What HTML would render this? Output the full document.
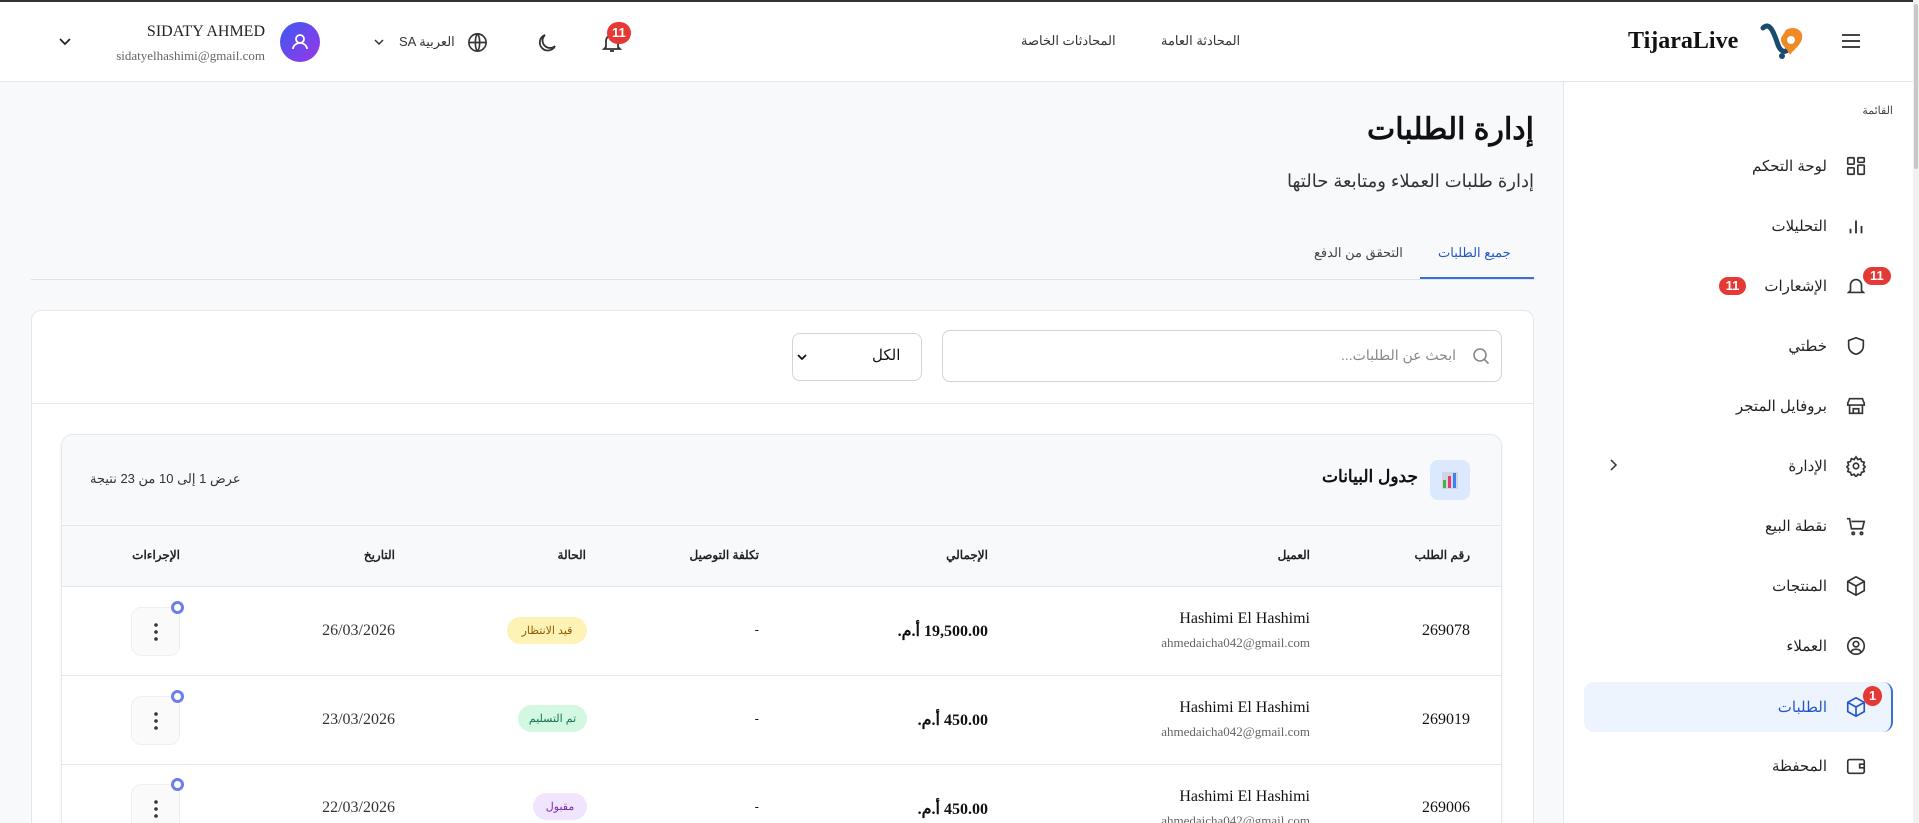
<!DOCTYPE html>
<html style="overflow:hidden;height:823px"><head><meta charset="utf-8"><style>
*{box-sizing:border-box;margin:0;padding:0}
html,body{width:1919px;height:823px;overflow:hidden}
body{background:#f8f9fb;font-family:"Liberation Sans","Noto Sans CJK SC",sans-serif;color:#111}
#wrap{position:relative;width:1919px;height:823px;overflow:hidden}
.abs{position:absolute}
.serif{font-family:"Liberation Serif","Noto Serif CJK SC",serif}
.header{left:0;top:0;width:1919px;height:82px;background:#fff;border-top:2px solid #333;border-bottom:1px solid #e5e7eb}
.side{left:1563px;top:82px;width:350px;height:741px;background:#fff;border-left:1px solid #e5e7eb;overflow:hidden}
.scroll{left:1913px;top:0;width:6px;height:823px;background:#f1f1f1}
.scroll div{position:absolute;left:1px;top:4px;width:4px;height:165px;background:#c8c8c8;border-radius:2px}
.item{position:absolute;right:28px;width:308px;height:50px;direction:rtl;display:flex;align-items:center;font-size:15px;color:#222}
.item svg{margin-right:18px;margin-left:18px}
.badge{background:#e53935;color:#fff;font-weight:bold;font-size:13px;border-radius:10px;padding:2px 7px;line-height:14px}
.r{direction:rtl;text-align:right}
.th{position:absolute;top:548px;font-size:12px;font-weight:bold;color:#222;direction:rtl}
.cell{position:absolute;direction:rtl}
.pill{position:absolute;height:27px;border-radius:14px;font-size:11px;display:flex;align-items:center;justify-content:center;direction:rtl}
.act{position:absolute;left:131px;width:49px;height:49px;border-radius:10px;background:#fafafa;border:1px solid #f0f0f0;display:flex;align-items:center;justify-content:center}
.dot{position:absolute;left:171px;width:13px;height:13px;border:3px solid #6b7fe8;border-radius:50%;background:#fff}
</style></head><body><div id="wrap">
<div class="abs header">
  <svg class="abs" style="left:1840px;top:30px" width="22" height="18" viewBox="0 0 22 18"><path d="M2 3h18M2 9h18M2 15h18" stroke="#444" stroke-width="2"/></svg>
  <svg class="abs" style="left:1760px;top:18px" width="48" height="42" viewBox="0 0 48 42"><path d="M3 8c6-6 10 2 14 14 3 10 8 12 12 6" stroke="#1a4a6e" stroke-width="5" fill="none" stroke-linecap="round"/><path d="M26 10c8-5 18 0 16 9-2 7-9 11-12 16-2-6-10-10-9-17z" fill="#f08a24"/><circle cx="31" cy="20" r="4" fill="#fff"/><circle cx="22" cy="36" r="3" fill="#1a4a6e"/></svg>
  <div class="abs" style="left:1628px;top:26px;font:bold 24px 'Liberation Serif',serif;color:#111">TijaraLive</div>
  <div class="abs" style="left:1161px;top:31px;font-size:13px;color:#333">المحادثة العامة</div>
  <div class="abs" style="left:1021px;top:31px;font-size:13px;color:#333">المحادثات الخاصة</div>
  <svg class="abs" style="left:600px;top:28px" width="24" height="24" viewBox="0 0 24 24" fill="none" stroke="#333" stroke-width="1.8"><path d="M6 17V11a6 6 0 0 1 12 0v6l2 2H4z"/><path d="M10 21h4"/></svg>
  <div class="abs badge" style="left:607px;top:20px;border-radius:12px;padding:4px 5px">11</div>
  <svg class="abs" style="left:535px;top:29px" width="24" height="24" viewBox="0 0 24 24" fill="none" stroke="#333" stroke-width="1.8"><path d="M20 15A8 8 0 1 1 10 4a6.5 6.5 0 0 0 10 11z"/></svg>
  <svg class="abs" style="left:466px;top:29px" width="23" height="23" viewBox="0 0 24 24" fill="none" stroke="#333" stroke-width="1.7"><circle cx="12" cy="12" r="9"/><path d="M3 12h18M12 3c3 3 3 15 0 18M12 3c-3 3-3 15 0 18"/></svg>
  <div class="abs" style="left:399px;top:32px;font-size:13px;color:#333">SA العربية</div>
  <svg class="abs" style="left:373px;top:35px" width="12" height="10" viewBox="0 0 12 10"><path d="M2 3l4 4 4-4" stroke="#333" stroke-width="1.5" fill="none"/></svg>
  <div class="abs" style="left:280px;top:20px;width:40px;height:40px;border-radius:50%;background:linear-gradient(135deg,#3b5bf0,#9b34e8)"><svg width="40" height="40" viewBox="0 0 40 40" fill="none" stroke="#fff" stroke-width="1.8"><circle cx="20" cy="17" r="4"/><path d="M13 27a7 6 0 0 1 14 0"/></svg></div>
  <div class="abs serif" style="left:90px;top:21px;width:175px;text-align:right;font-size:16px;color:#222">SIDATY AHMED</div>
  <div class="abs serif" style="left:70px;top:46px;width:195px;text-align:right;font-size:13px;color:#666">sidatyelhashimi@gmail.com</div>
  <svg class="abs" style="left:58px;top:35px" width="14" height="10" viewBox="0 0 14 10"><path d="M2 2l5 5 5-5" stroke="#222" stroke-width="1.7" fill="none"/></svg>
</div>

<div class="abs side">
  <div class="abs" style="right:20px;top:22px;font-size:11px;color:#444">القائمة</div>
  <div class="item" style="top:59px"><svg width="22" height="22" viewBox="0 0 24 24" fill="none" stroke="#333" stroke-width="1.8"><rect x="3" y="3" width="7" height="7" rx="1"/><rect x="14" y="3" width="7" height="5" rx="1"/><rect x="3" y="14" width="7" height="7" rx="1"/><rect x="14" y="11" width="7" height="10" rx="1"/></svg>لوحة التحكم</div>
  <div class="item" style="top:119px"><svg width="22" height="22" viewBox="0 0 24 24" fill="none" stroke="#333" stroke-width="2"><path d="M6 20v-5M12 20V6M18 20v-8"/></svg>التحليلات</div>
  <div class="item" style="top:179px"><svg width="22" height="22" viewBox="0 0 24 24" fill="none" stroke="#333" stroke-width="1.8"><path d="M6 17V11a6 6 0 0 1 12 0v6l2 2H4z"/></svg>الإشعارات<span class="badge" style="margin-right:18px">11</span></div>
  <div class="abs badge" style="left:299px;top:185px">11</div>
  <div class="item" style="top:239px"><svg width="22" height="22" viewBox="0 0 24 24" fill="none" stroke="#333" stroke-width="1.8"><path d="M12 3l8 3v6c0 5-4 8-8 9-4-1-8-4-8-9V6z"/></svg>خطتي</div>
  <div class="item" style="top:299px"><svg width="22" height="22" viewBox="0 0 24 24" fill="none" stroke="#333" stroke-width="1.8"><path d="M3 9l2-5h14l2 5v2H3zM5 11v9h14v-9M9 20v-5h6v5"/></svg>بروفايل المتجر</div>
  <div class="item" style="top:359px"><svg width="22" height="22" viewBox="0 0 24 24" fill="none" stroke="#333" stroke-width="1.8"><circle cx="12" cy="12" r="3"/><path d="M12 2l2 3 3-1 1 3 3 1-1 3 2 2-2 2 1 3-3 1-1 3-3-1-2 3-2-3-3 1-1-3-3-1 1-3-2-2 2-2-1-3 3-1 1-3 3 1z"/></svg>الإدارة</div>
  <svg class="abs" style="left:44px;top:376px" width="10" height="14" viewBox="0 0 10 14"><path d="M3 2l5 5-5 5" stroke="#333" stroke-width="1.5" fill="none"/></svg>
  <div class="item" style="top:419px"><svg width="22" height="22" viewBox="0 0 24 24" fill="none" stroke="#333" stroke-width="1.8"><path d="M2 4h3l2 11h12l2-8H7"/><circle cx="9" cy="20" r="1.3"/><circle cx="18" cy="20" r="1.3"/></svg>نقطة البيع</div>
  <div class="item" style="top:479px"><svg width="22" height="22" viewBox="0 0 24 24" fill="none" stroke="#333" stroke-width="1.8"><path d="M12 2l9 5v10l-9 5-9-5V7zM3 7l9 5 9-5M12 12v10"/></svg>المنتجات</div>
  <div class="item" style="top:539px"><svg width="22" height="22" viewBox="0 0 24 24" fill="none" stroke="#333" stroke-width="1.8"><circle cx="12" cy="12" r="9"/><circle cx="12" cy="10" r="3"/><path d="M6.5 18.5a6 5 0 0 1 11 0"/></svg>العملاء</div>
  <div class="abs" style="left:20px;top:600px;width:309px;height:50px;background:#eef4fe;border-radius:10px;border-right:2px solid #3b6fd8"></div>
  <div class="item" style="top:600px;color:#2457c5"><svg width="22" height="22" viewBox="0 0 24 24" fill="none" stroke="#2457c5" stroke-width="1.8"><path d="M12 2l9 5v10l-9 5-9-5V7zM3 7l9 5 9-5M12 12v10"/></svg>الطلبات</div>
  <div class="abs badge" style="left:299px;top:604px;border-radius:50%;padding:3px 6px">1</div>
  <div class="item" style="top:659px"><svg width="22" height="22" viewBox="0 0 24 24" fill="none" stroke="#333" stroke-width="1.8"><rect x="3" y="5" width="18" height="15" rx="2"/><path d="M21 10h-5v4h5"/></svg>المحفظة</div>
  <div class="item" style="top:726px"><svg width="22" height="22" viewBox="0 0 24 24" fill="none" stroke="#333" stroke-width="1.8"><path d="M4 8h16v12H4z"/></svg>المدفوعات (12)</div>
</div>
<div class="abs scroll"><div></div></div>

<div class="abs r" style="right:385px;top:112px;font-size:30px;font-weight:bold">إدارة الطلبات</div>
<div class="abs r" style="right:385px;top:171px;font-size:18px;color:#333">إدارة طلبات العملاء ومتابعة حالتها</div>
<div class="abs" style="left:31px;top:279px;width:1503px;height:1px;background:#dfe3e8"></div>
<div class="abs" style="left:1420px;top:277px;width:114px;height:2px;background:#3b6fd8"></div>
<div class="abs" style="left:1438px;top:245px;font-size:13px;color:#2457c5">جميع الطلبات</div>
<div class="abs" style="left:1314px;top:245px;font-size:13px;color:#444">التحقق من الدفع</div>

<div class="abs" style="left:31px;top:310px;width:1503px;height:600px;background:#fff;border:1px solid #e5e7eb;border-radius:10px"></div>
<div class="abs" style="left:942px;top:330px;width:560px;height:52px;border:1px solid #d1d5db;border-radius:8px;background:#fff"></div>
<svg class="abs" style="left:1471px;top:346px" width="20" height="20" viewBox="0 0 20 20" fill="none" stroke="#888" stroke-width="1.6"><circle cx="9" cy="9" r="6"/><path d="M13.5 13.5l4 4"/></svg>
<div class="abs" style="left:1320px;top:347px;width:136px;text-align:right;font-size:14px;color:#888;direction:rtl">ابحث عن الطلبات...</div>
<div class="abs" style="left:792px;top:333px;width:130px;height:48px;border:1px solid #d1d5db;border-radius:8px;background:#fff"></div>
<div class="abs" style="left:872px;top:346px;font-size:15px;color:#111">الكل</div>
<svg class="abs" style="left:796px;top:352px" width="12" height="10" viewBox="0 0 12 10"><path d="M2 3l4 4 4-4" stroke="#111" stroke-width="1.7" fill="none"/></svg>
<div class="abs" style="left:31px;top:403px;width:1503px;height:1px;background:#e5e7eb"></div>

<div class="abs" style="left:61px;top:434px;width:1441px;height:500px;background:#fff;border:1px solid #e5e7eb;border-radius:12px;overflow:hidden;box-shadow:0 1px 4px rgba(0,0,0,.05)">
  <div style="height:91px;background:#f8f9fb;border-bottom:1px solid #e5e7eb"></div>
  <div style="height:61px;background:#f8f9fb;border-bottom:1px solid #e5e7eb"></div>
  <div style="position:absolute;top:240px;left:0;right:0;height:1px;background:#e5e7eb"></div>
  <div style="position:absolute;top:329px;left:0;right:0;height:1px;background:#e5e7eb"></div>
</div>
<div class="abs" style="left:1430px;top:460px;width:40px;height:40px;border-radius:8px;background:#dbe8fd"><svg width="40" height="40" viewBox="0 0 40 40"><rect x="12" y="12" width="16" height="17" fill="#cfd6de"/><rect x="13" y="20" width="3" height="8" fill="#4caf50"/><rect x="18" y="16" width="3" height="12" fill="#e53970"/><rect x="23" y="13" width="3" height="15" fill="#3b82f6"/></svg></div>
<div class="abs" style="left:1310px;top:467px;width:108px;text-align:right;font-size:17px;font-weight:bold;direction:rtl">جدول البيانات</div>
<div class="abs" style="left:90px;top:471px;font-size:13px;color:#333;direction:rtl">عرض 1 إلى 10 من 23 نتيجة</div>

<div class="th" style="right:449px">رقم الطلب</div>
<div class="th" style="right:609px">العميل</div>
<div class="th" style="right:931px">الإجمالي</div>
<div class="th" style="right:1160px">تكلفة التوصيل</div>
<div class="th" style="right:1333px">الحالة</div>
<div class="th" style="right:1524px">التاريخ</div>
<div class="th" style="right:1739px">الإجراءات</div>

<div class="cell serif" style="right:449px;top:622px;font-size:16px">269078</div>
<div class="cell serif" style="right:609px;top:610px;font-size:16px">Hashimi El Hashimi</div>
<div class="cell serif" style="right:609px;top:635px;font-size:13px;color:#666">ahmedaicha042@gmail.com</div>
<div class="cell serif" style="right:931px;top:621px;font-size:16px;font-weight:bold">19,500.00 أ.م.</div>
<div class="cell" style="right:1160px;top:622px;font-size:13px">-</div>
<div class="pill" style="left:507px;top:617px;width:80px;background:#fef3b4;color:#8a5a00">قيد الانتظار</div>
<div class="cell serif" style="right:1524px;top:622px;font-size:16px;color:#333">26/03/2026</div>
<div class="act" style="top:607px"><svg width="6" height="20"><circle cx="3" cy="3" r="1.8" fill="#333"/><circle cx="3" cy="10" r="1.8" fill="#333"/><circle cx="3" cy="17" r="1.8" fill="#333"/></svg></div>
<div class="dot" style="top:601px"></div>

<div class="cell serif" style="right:449px;top:711px;font-size:16px">269019</div>
<div class="cell serif" style="right:609px;top:699px;font-size:16px">Hashimi El Hashimi</div>
<div class="cell serif" style="right:609px;top:724px;font-size:13px;color:#666">ahmedaicha042@gmail.com</div>
<div class="cell serif" style="right:931px;top:710px;font-size:16px;font-weight:bold">450.00 أ.م.</div>
<div class="cell" style="right:1160px;top:711px;font-size:13px">-</div>
<div class="pill" style="left:518px;top:705px;width:69px;background:#d3f8e2;color:#16734a">تم التسليم</div>
<div class="cell serif" style="right:1524px;top:711px;font-size:16px;color:#333">23/03/2026</div>
<div class="act" style="top:696px"><svg width="6" height="20"><circle cx="3" cy="3" r="1.8" fill="#333"/><circle cx="3" cy="10" r="1.8" fill="#333"/><circle cx="3" cy="17" r="1.8" fill="#333"/></svg></div>
<div class="dot" style="top:690px"></div>

<div class="cell serif" style="right:449px;top:799px;font-size:16px">269006</div>
<div class="cell serif" style="right:609px;top:788px;font-size:16px">Hashimi El Hashimi</div>
<div class="cell serif" style="right:609px;top:813px;font-size:13px;color:#666">ahmedaicha042@gmail.com</div>
<div class="cell serif" style="right:931px;top:799px;font-size:16px;font-weight:bold">450.00 أ.م.</div>
<div class="cell" style="right:1160px;top:799px;font-size:13px">-</div>
<div class="pill" style="left:533px;top:793px;width:54px;background:#f1e4fd;color:#7b2fa8">مقبول</div>
<div class="cell serif" style="right:1524px;top:799px;font-size:16px;color:#333">22/03/2026</div>
<div class="act" style="top:784px"><svg width="6" height="20"><circle cx="3" cy="3" r="1.8" fill="#333"/><circle cx="3" cy="10" r="1.8" fill="#333"/><circle cx="3" cy="17" r="1.8" fill="#333"/></svg></div>
<div class="dot" style="top:778px"></div>
</div></body></html>
